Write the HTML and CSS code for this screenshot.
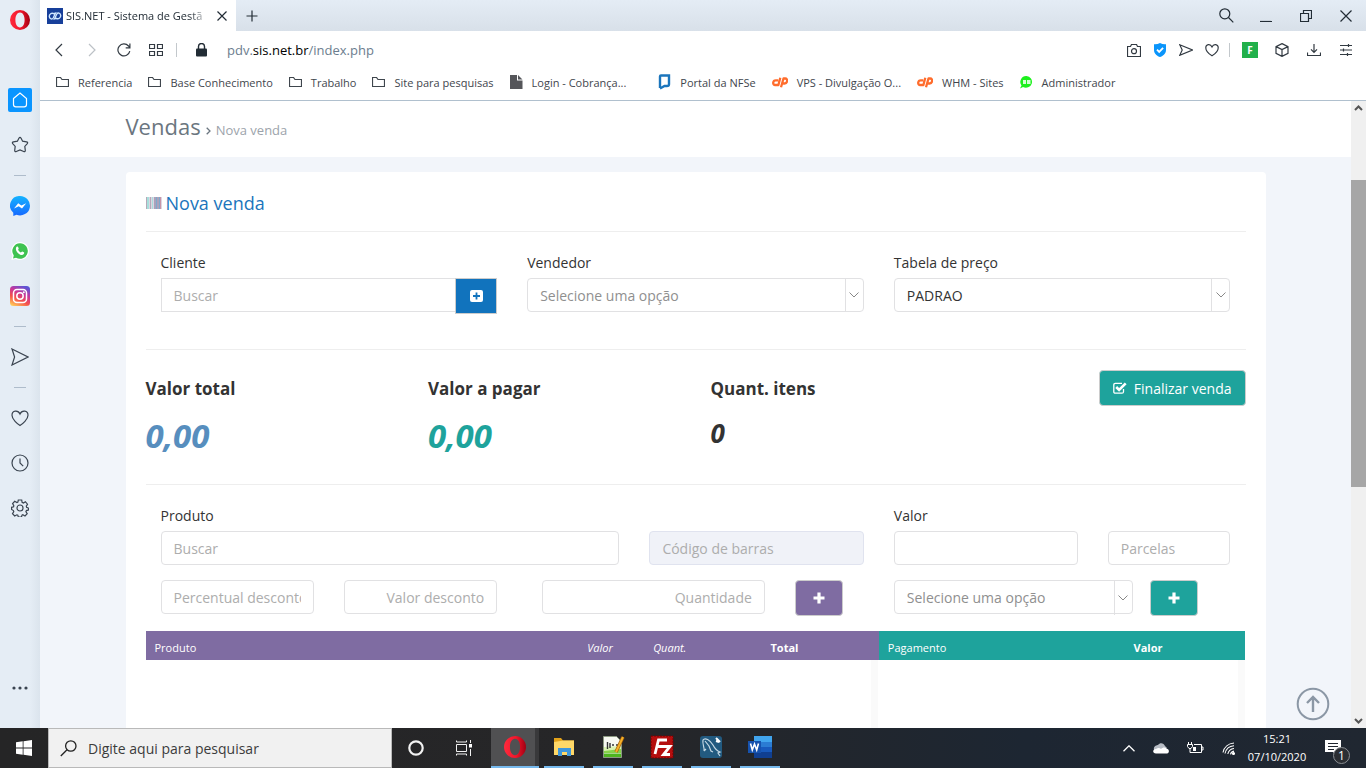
FILE: index.html
```html
<!DOCTYPE html>
<html lang="pt-BR">
<head>
<meta charset="utf-8">
<title>SIS.NET - Sistema de Gestão</title>
<link rel="stylesheet" href="styles.css">
</head>
<body>
<div class="desktop">
  <div class="window">
    <nav class="rail" aria-label="Barra lateral">
      <button class="rail-logo" aria-label="Menu do Opera"><svg width="20" height="20" viewBox="0 0 20 20"><defs><linearGradient id="op" x1="0" x2="1"><stop offset="0" stop-color="#ff2a3d"/><stop offset=".55" stop-color="#f0162b"/><stop offset="1" stop-color="#a10012"/></linearGradient></defs><path fill="url(#op)" fill-rule="evenodd" d="M10 0a10 10 0 1 0 0 20a10 10 0 0 0 0-20zM10 2.600c2.900 0 4.600 3.300 4.600 7.400s-1.700 7.400-4.600 7.400s-4.600-3.300-4.600-7.400s1.700-7.400 4.600-7.400z"/></svg></button>
      <button class="rail-item" aria-label="Início"><span class="rail-active"><svg class="line" width="16" height="16" viewBox="0 0 16 16"><path d="M1.500 6.500L8 1l6.500 5.500v6a2.300 2.300 0 0 1-2.300 2.300H3.800a2.300 2.300 0 0 1-2.300-2.300z"/></svg></span></button>
      <button class="rail-item" aria-label="Favoritos"><svg class="line" width="18" height="18" viewBox="0 0 18 18"><path d="M9 1.300c.5 0 .8.500 1.100 1l1.500 2.900 3.900.7c1.200.2 1.500 1 .8 1.800l-2.500 2.700.5 3.900c.1 1.200-.6 1.700-1.600 1.200L9 14l-3.700 1.500c-1 .5-1.700 0-1.600-1.200l.5-3.900-2.500-2.700c-.7-.8-.4-1.600.8-1.800l3.900-.7 1.500-2.900c.3-.5.600-1 1.100-1z"/></svg></button>
      <span class="rail-sep"></span>
      <button class="rail-item" aria-label="Messenger"><svg width="20" height="20" viewBox="0 0 20 20"><defs><linearGradient id="ms" x1="0" y1="0" x2="0" y2="1"><stop offset="0" stop-color="#14b3ff"/><stop offset="1" stop-color="#1769ff"/></linearGradient></defs><path fill="url(#ms)" d="M10 0a10 9.700 0 1 1-3.500 18.800L3.300 20v-3.200A9.600 9.600 0 0 1 10 0z"/><path fill="#fff" d="M4 12.600l4.200-5.300 3.200 2.300 4.800-2.400-4.200 5.400-3.300-2.400z"/></svg></button>
      <button class="rail-item" aria-label="WhatsApp"><svg width="20" height="20" viewBox="0 0 20 20"><path fill="#fff" d="M10 1a9 9 0 1 1-4.300 16.900L1.300 19l1.200-4.300A9 9 0 0 1 10 1z"/><path fill="#3fc351" d="M10 2.200a7.800 7.800 0 1 1-4 14.500l-3 .8.800-3A7.800 7.800 0 0 1 10 2.200z"/><path fill="#fff" d="M7.100 5.600c.5-.2.800 0 1 .5l.6 1.500c.1.300-.6 1-.6 1.200.5 1.100 1.400 2 2.800 2.700.4 0 .9-1.100 1.300-1l1.700.8c.9.400-.1 2.700-1.800 2.700C9 13.900 5.900 10.200 5.900 7.900c0-1 .6-2.100 1.200-2.300z"/></svg></button>
      <button class="rail-item" aria-label="Instagram"><svg width="20" height="20" viewBox="0 0 20 20"><defs><linearGradient id="ig" x1=".2" y1="1" x2=".7" y2="0"><stop offset="0" stop-color="#ffc857"/><stop offset=".35" stop-color="#f5514a"/><stop offset=".65" stop-color="#c9369a"/><stop offset="1" stop-color="#5b55d6"/></linearGradient></defs><rect width="20" height="20" rx="3.500" fill="url(#ig)"/><g fill="none" stroke="#fff" stroke-width="1.500"><rect x="3.500" y="3.500" width="13" height="13" rx="3.500"/><circle cx="10" cy="10" r="3.200"/></g><circle cx="13.800" cy="6.200" r="1" fill="#fff"/></svg></button>
      <span class="rail-sep"></span>
      <button class="rail-item" aria-label="Meu fluxo"><svg class="line" width="18" height="18" viewBox="0 0 18 18"><path d="M1 1l16 8L1 17l2.600-8z"/></svg></button>
      <span class="rail-sep"></span>
      <button class="rail-item" aria-label="Favoritos do site"><svg class="line" width="18" height="18" viewBox="0 0 18 18"><path d="M9 16.500C6.500 15 1 10.500 1 6.200c0-4.800 6-5.600 8-1.200 2-4.400 8-3.600 8 1.200 0 4.300-5.500 8.800-8 10.300z"/></svg></button>
      <button class="rail-item" aria-label="Histórico"><svg class="line" width="18" height="18" viewBox="0 0 18 18"><circle cx="9" cy="9" r="8"/><path d="M9 4.500V9l3.200 3.200"/></svg></button>
      <button class="rail-item" aria-label="Configurações"><svg class="line" width="18" height="18" viewBox="0 0 18 18"><circle cx="9" cy="9" r="3"/><path d="M7.300 1h3.400l.4 2.400 1.300.7 2-1.400 2.100 2.500-1.200 2 .3 1.200 2 .8v1.700l-2.200.7-.5 1.100 1.300 2-2.200 2.300-2.200-1.200-.8.400-.5 1.800H7.300l-.5-1.800-.9-.4-2.200 1.200-2.200-2.300 1.300-2-.4-1.100L.6 10.500V8.300l2-.5.200-1.200-1.200-2 2.100-2.300 2.200 1.300 1-.5z"/></svg></button>
      <button class="rail-item rail-more" aria-label="Mais"><svg width="16" height="4" viewBox="0 0 16 4" fill="#3a4450"><circle cx="2" cy="2" r="1.600"/><circle cx="8" cy="2" r="1.600"/><circle cx="14" cy="2" r="1.600"/></svg></button>
    </nav>
    <div class="browser">
      <div class="tabs">
        <div class="tab">
          <svg width="16" height="16" viewBox="0 0 16 16"><rect width="16" height="16" fill="#173f9a"/><g fill="none" stroke="#cfe6ff" stroke-width="1.400"><path d="M8.500 5.200L6.200 10c-1 1.600-3.600 1.100-3.900-1.300-.3-2.600 2.500-4.300 4.400-3z"/><path d="M7.500 10.800L9.800 6c1-1.600 3.600-1.100 3.900 1.300.3 2.600-2.500 4.300-4.400 3z"/></g></svg>
          <span class="tab-title">SIS.NET - Sistema de Gestã</span>
          <button class="tab-close" aria-label="Fechar aba"><svg class="line" width="10" height="10" viewBox="0 0 10 10"><path d="M.5.5l9 9M9.500.5l-9 9"/></svg></button>
        </div>
        <button class="tab-new" aria-label="Nova aba"><svg class="line" width="12" height="12" viewBox="0 0 12 12"><path d="M6 .5v11M.5 6h11"/></svg></button>
        <div class="win-buttons">
          <button aria-label="Pesquisar abas"><svg class="line" width="15" height="15" viewBox="0 0 15 15"><circle cx="5.800" cy="5.800" r="5"/><path d="M9.500 9.500l4.800 4.800"/></svg></button>
          <button aria-label="Minimizar"><svg class="line" width="12" height="12" viewBox="0 0 12 12"><path d="M0 11.500h12"/></svg></button>
          <button aria-label="Restaurar"><svg class="line" width="12" height="12" viewBox="0 0 12 12"><path d="M.5 3.500h8v8h-8zM3.500 3.500v-3h8v8h-3"/></svg></button>
          <button aria-label="Fechar"><svg class="line" width="12" height="12" viewBox="0 0 12 12"><path d="M.5.500l11 11M11.500.5l-11 11"/></svg></button>
        </div>
      </div>
      <div class="toolbar">
        <button class="tool" aria-label="Voltar"><svg class="line" width="14" height="14" viewBox="0 0 14 14"><path d="M9 1L3 7l6 6"/></svg></button>
        <button class="tool faded" aria-label="Avançar"><svg class="line" width="14" height="14" viewBox="0 0 14 14"><path d="M4 1l6 6-6 6"/></svg></button>
        <button class="tool" aria-label="Recarregar"><svg class="line" width="14" height="14" viewBox="0 0 14 14"><path d="M12.800 8.200A6 6 0 1 1 11.500 3l1.300 1.700M12.900.5v4.300H8.700"/></svg></button>
        <button class="tool" aria-label="Discagem rápida"><svg class="line" width="14" height="12" viewBox="0 0 14 12"><path d="M.5.500h5v4h-5zM8.500.5h5v4h-5zM.5 7.500h5v4h-5zM8.500 7.500h5v4h-5z"/></svg></button>
        <span class="tool-sep"></span>
        <button class="tool lock" aria-label="Segurança do site"><svg width="11" height="14" viewBox="0 0 11 14"><rect y="5.500" width="11" height="8" rx="1" fill="#222c35"/><path d="M2.500 6V3.500a3 3 0 0 1 6 0V6" fill="none" stroke="#222c35" stroke-width="1.400"/></svg></button>
        <div class="address">pdv.<b>sis.net.br</b>/index.php</div>
        <button class="tool small" aria-label="Captura de tela"><svg class="line" width="14" height="13" viewBox="0 0 14 13"><path d="M.5 2.500h3l1-2h5l1 2h3v10H.5z"/><circle cx="7" cy="7.200" r="2.500"/></svg></button>
        <button class="tool small" aria-label="Bloqueador"><svg width="12" height="14" viewBox="0 0 12 14"><path fill="#0a95fb" d="M6 0c1.800 1 4 1.400 6 1.200V7c0 4-3.600 6.200-6 7C3.600 13.200 0 11 0 7V1.200C2 1.400 4.200 1 6 0z"/><path d="M3 6.700l2.200 2.200 3.900-4" fill="none" stroke="#fff" stroke-width="1.800"/></svg></button>
        <button class="tool small" aria-label="Enviar"><svg class="line" width="14" height="12" viewBox="0 0 14 12"><path d="M.7.7L13.500 6 .7 11.300 3.200 6z"/></svg></button>
        <button class="tool small" aria-label="Favoritar"><svg class="line" width="14" height="14" viewBox="0 0 18 18"><path stroke-width="1.500" d="M9 16.500C6.500 15 1 10.500 1 6.200c0-4.800 6-5.600 8-1.200 2-4.400 8-3.600 8 1.200 0 4.300-5.500 8.800-8 10.300z"/></svg></button>
        <span class="tool-sep"></span>
        <button class="tool" aria-label="Extensão F"><span class="ext">F</span></button>
        <button class="tool" aria-label="Extensões"><svg class="line" width="14" height="14" viewBox="0 0 14 14"><path d="M7 .6l6 3v6.800l-6 3-6-3V3.600zM1 3.600l6 3 6-3M7 6.600v6.800"/></svg></button>
        <button class="tool" aria-label="Downloads"><svg class="line" width="14" height="12" viewBox="0 0 14 12"><path d="M7 0v8M4 5.300l3 3 3-3M.5 8.500v3h13v-3"/></svg></button>
        <button class="tool" aria-label="Configuração fácil"><svg class="line" width="12" height="12" viewBox="0 0 12 12"><path d="M0 1.500h12M0 6h12M0 10.500h12M8.500 0v3M3.500 4.500v3M7.500 9v3"/></svg></button>
      </div>
      <nav class="bookmarks" aria-label="Favoritos">
        <a href="#"><svg class="line" width="13" height="10" viewBox="0 0 13 10"><path d="M.5 9.500v-9h4l1.500 2h6.500v7z"/></svg>Referencia</a>
        <a href="#"><svg class="line" width="13" height="10" viewBox="0 0 13 10"><path d="M.5 9.500v-9h4l1.500 2h6.500v7z"/></svg>Base Conhecimento</a>
        <a href="#"><svg class="line" width="13" height="10" viewBox="0 0 13 10"><path d="M.5 9.500v-9h4l1.500 2h6.500v7z"/></svg>Trabalho</a>
        <a href="#"><svg class="line" width="13" height="10" viewBox="0 0 13 10"><path d="M.5 9.500v-9h4l1.500 2h6.500v7z"/></svg>Site para pesquisas</a>
        <a href="#" class="wide"><svg width="13" height="14" viewBox="0 0 13 14"><path fill="#55565a" d="M0 0h7v5.500h5.500V14H0zM8 0l4.500 4.500H8z"/></svg>Login - Cobrança...</a>
        <a href="#"><svg width="13" height="16" viewBox="0 0 13 16"><path fill="none" stroke="#1b75bc" stroke-width="2.400" d="M2 14V2.500q0-1 1-1h8v8.700q0 1.800-2 1.800H6.500L2 14.500"/></svg>Portal da NFSe</a>
        <a href="#"><svg width="16" height="12" viewBox="0 0 16 12"><path fill="none" stroke="#ff6c2c" stroke-width="2.300" stroke-linejoin="round" d="M6.200 4.300H3.800C.7 4.300.2 9 3.200 9h3.200L8.300 1.800M9 11.300l2.500-8.800h1.700c3.200 0 2.100 5-.6 5h-1.500"/></svg>VPS - Divulgação O...</a>
        <a href="#"><svg width="16" height="12" viewBox="0 0 16 12"><path fill="none" stroke="#ff6c2c" stroke-width="2.300" stroke-linejoin="round" d="M6.200 4.300H3.800C.7 4.300.2 9 3.200 9h3.200L8.300 1.800M9 11.300l2.500-8.800h1.700c3.200 0 2.100 5-.6 5h-1.500"/></svg>WHM - Sites</a>
        <a href="#"><svg width="13" height="13" viewBox="0 0 13 13"><path fill="#1df01d" d="M6.500 0a6 5.900 0 1 1-3.500 11L0 12.600l1.500-3.200A6 5.900 0 0 1 6.500 0z"/><path fill="#d4ffd4" d="M3 4h3v4H3zM7 4h3.500v4H7z"/></svg>Administrador</a>
      </nav>
      <div class="viewport">
        <main class="page">
          <header class="page-head">
            <div class="container crumbs">
              <h1>Vendas</h1>
              <svg width="5" height="8" viewBox="0 0 5 8"><path d="M.7.700L4 4 .7 7.300" fill="none" stroke="#6b7680" stroke-width="1.300"/></svg>
              <span>Nova venda</span>
            </div>
          </header>
          <div class="container body">
            <section class="card">
              <h2><svg width="16" height="12" viewBox="0 0 16 12"><path fill="#dcd5e2" d="M0 0h16v12H0z"/><path fill="#b5a9b8" d="M0 0h1v12H0zM4 0h1v12H4z"/><path fill="#a8dfdc" d="M1 0h2v12H1zM6 0h1v12H6z"/><path fill="#aba2ba" d="M8 0h2v12H8zM11 0h2v12h-2z"/><path fill="#7fa8cc" d="M10 0h1v12h-1zM13 0h1v12h-1z"/><path fill="#c895a8" d="M14 0h1v12h-1z"/></svg>Nova venda</h2>
              <form class="sale-form">
                <div class="field">
                  <label for="cliente">Cliente</label>
                  <div class="group">
                    <input id="cliente" type="text" placeholder="Buscar">
                    <button type="button" class="btn btn-blue" aria-label="Adicionar cliente"><svg width="13" height="12" viewBox="0 0 13 12"><rect width="13" height="12" rx="2" fill="#fff"/><path d="M6.500 2.500v7M3 6h7" stroke="#1173bd" stroke-width="1.800"/></svg></button>
                  </div>
                </div>
                <div class="field">
                  <label for="vendedor">Vendedor</label>
                  <div class="select"><select id="vendedor" class="muted"><option>Selecione uma opção</option></select><span class="arrow"><svg width="10" height="6" viewBox="0 0 10 6"><path d="M.5.500L5 5 9.500.5"/></svg></span></div>
                </div>
                <div class="field">
                  <label for="tabela">Tabela de preço</label>
                  <div class="select"><select id="tabela"><option>PADRAO</option></select><span class="arrow"><svg width="10" height="6" viewBox="0 0 10 6"><path d="M.5.500L5 5 9.500.5"/></svg></span></div>
                </div>
              </form>
              <div class="totals">
                <div class="total blue"><h3>Valor total</h3><p>0,00</p></div>
                <div class="total teal"><h3>Valor a pagar</h3><p>0,00</p></div>
                <div class="total count"><h3>Quant. itens</h3><p>0</p></div>
                <div class="finish"><button type="button" class="btn btn-teal"><svg width="14" height="12" viewBox="0 0 14 12"><path d="M10.500 7v2.700q0 1.500-1.500 1.500H2.300Q.8 11.200.8 9.700V2.900q0-1.500 1.500-1.500H9" fill="none" stroke="#fff" stroke-width="1.300"/><path d="M3.200 5l2.900 2.900L12.700 1.300" fill="none" stroke="#fff" stroke-width="2.600"/></svg>Finalizar venda</button></div>
              </div>
              <div class="entry">
                <form class="left">
                  <div class="product-row">
                    <div class="field"><label for="produto">Produto</label><input id="produto" type="text" placeholder="Buscar"></div>
                    <div class="field end"><input type="text" aria-label="Código de barras" placeholder="Código de barras" disabled></div>
                  </div>
                  <div class="discount-row">
                    <div class="field"><input type="text" aria-label="Percentual desconto" placeholder="Percentual desconto"></div>
                    <div class="field"><input class="right-text" type="text" aria-label="Valor desconto" placeholder="Valor desconto"></div>
                    <div class="field quantity"><input class="right-text" type="text" aria-label="Quantidade" placeholder="Quantidade"></div>
                    <div class="field"><button type="button" class="btn btn-purple" aria-label="Adicionar produto"><svg width="12" height="12" viewBox="0 0 12 12"><path d="M6 .5v11M.5 6h11" stroke="#fff" stroke-width="3.200"/></svg></button></div>
                  </div>
                </form>
                <form class="right">
                  <div class="payment-row">
                    <div class="field"><label for="valor">Valor</label><input id="valor" type="text"></div>
                    <div class="field end"><input type="text" aria-label="Parcelas" placeholder="Parcelas"></div>
                  </div>
                  <div class="method-row">
                    <div class="select"><select class="muted" aria-label="Forma de pagamento"><option>Selecione uma opção</option></select><span class="arrow"><svg width="10" height="6" viewBox="0 0 10 6"><path d="M.5.500L5 5 9.500.5"/></svg></span></div>
                    <button type="button" class="btn btn-teal" aria-label="Adicionar pagamento"><svg width="12" height="12" viewBox="0 0 12 12"><path d="M6 .5v11M.5 6h11" stroke="#fff" stroke-width="3.200"/></svg></button>
                  </div>
                </form>
              </div>
              <div class="lists">
                <div class="list items">
                  <table><colgroup><col class="c-name"><col class="c-price"><col class="c-qty"><col></colgroup><thead><tr><th>Produto</th><th class="italic">Valor</th><th class="italic">Quant.</th><th class="strong">Total</th></tr></thead></table>
                  <div class="list-body"></div>
                </div>
                <div class="list payments">
                  <table><colgroup><col class="c-pay"><col></colgroup><thead><tr><th>Pagamento</th><th class="strong">Valor</th></tr></thead></table>
                  <div class="list-body"></div>
                </div>
              </div>
            </section>
          </div>
          <button class="to-top" aria-label="Voltar ao topo"><svg width="34" height="34" viewBox="0 0 34 34" fill="none" stroke="#8b97a5" stroke-width="2"><circle cx="17" cy="17" r="15.300"/><path d="M17 25V10.500M11 16l6-6 6 6" stroke-width="2.400"/></svg></button>
        </main>
        <div class="scrollbar" aria-hidden="true">
          <svg width="9" height="6" viewBox="0 0 9 6"><path d="M1 5l3.500-3.500L8 5"/></svg>
          <div class="track"><div class="thumb"></div></div>
          <svg width="9" height="6" viewBox="0 0 9 6"><path d="M1 1l3.500 3.500L8 1"/></svg>
        </div>
      </div>
    </div>
  </div>
  <footer class="taskbar">
    <button class="start" aria-label="Iniciar"><svg width="16" height="16" viewBox="0 0 16 16" fill="#fff"><path d="M0 2.200l6.700-.9v6.300H0zM7.500 1.200L16 0v7.600H7.500zM0 8.400h6.700v6.300L0 13.800zM7.500 8.400H16V16l-8.500-1.200z"/></svg></button>
    <label class="search"><svg width="17" height="17" viewBox="0 0 17 17" fill="none" stroke="#222" stroke-width="1.300"><circle cx="10.800" cy="6" r="5.200"/><path d="M7 9.800L.8 16"/></svg><input type="text" placeholder="Digite aqui para pesquisar" aria-label="Pesquisar"></label>
    <button class="slot" aria-label="Cortana"><svg width="16" height="16" viewBox="0 0 16 16"><circle cx="8" cy="8" r="6.700" fill="none" stroke="#f2f2f2" stroke-width="2.200"/></svg></button>
    <button class="slot" aria-label="Visão de tarefas"><svg width="16" height="16" viewBox="0 0 16 16" fill="none" stroke="#f2f2f2"><path d="M.5 4.500h10v7H.5zM.5.500v1.500h10V.5M.5 15.500V14h10v1.500M14.500 0v3M14.500 9v7"/><path fill="#fff" stroke="none" d="M13 4h3v3.500h-3z"/></svg></button>
    <div class="apps">
      <button class="app active" aria-label="Opera"><svg width="22" height="22" viewBox="0 0 20 20"><path fill="url(#op)" fill-rule="evenodd" d="M10 0a10 10 0 1 0 0 20a10 10 0 0 0 0-20zM10 2.600c2.900 0 4.600 3.300 4.600 7.400s-1.700 7.400-4.600 7.400s-4.600-3.300-4.600-7.400s1.700-7.400 4.600-7.400z"/></svg></button>
      <button class="app" aria-label="Explorador de Arquivos"><svg width="22" height="20" viewBox="0 0 22 20"><path fill="#e3a21a" d="M1 1h7l2 2.500h11V8H1z"/><path fill="#ffd868" d="M1 5l9-1.500h11V18H1z"/><path fill="#3f97dc" d="M5 19v-8h13v8h-4v-4H9v4z"/></svg></button>
      <button class="app" aria-label="Notepad++"><svg width="24" height="24" viewBox="0 0 24 24"><path fill="#f7f9f2" stroke="#8d9a83" d="M2.500 1.500h13l5 5v16h-18z"/><path fill="#d9f3b0" d="M3 12l17-1v6H3z"/><path fill="#86d34a" d="M3 16l17-2v4H3z"/><path fill="#4eb51f" d="M3 18.500h17V22H3z"/><path fill="none" stroke="#333" stroke-width="1.400" d="M6.500 7v7M9 8v5M11 10h2M15 10h2"/><path d="M22 2l-7 15" stroke="#a55e08" stroke-width="3.400"/><path d="M22 2l-7 15" stroke="#f4b12a" stroke-width="2"/></svg></button>
      <button class="app" aria-label="FileZilla"><svg width="24" height="24" viewBox="0 0 24 24"><path fill="#b50e0e" stroke="#760000" stroke-dasharray="2 1" d="M1 1h22v22H1z"/><path fill="none" stroke="#fff" stroke-width="2.800" d="M5 19L8.500 5H17M7 11.500h7.500M12 11.500h8l-6.500 8H20"/></svg></button>
      <button class="app" aria-label="MySQL Workbench"><svg width="24" height="24" viewBox="0 0 24 24"><rect x="1" y="1" width="22" height="22" rx="3" fill="#225a80"/><path fill="none" stroke="#c5d9e5" stroke-width="1.200" d="M5 16c1-3-2-7-1-11 2-3 7 0 10 5 2 4 4 6 7 7l-2 1 2 3M5 16l2-2M6 6l4 5 2 5 2 1"/><path fill="none" stroke="#fff" stroke-width="2" d="M17 3l4 4M17 6l3 1"/></svg></button>
      <button class="app" aria-label="Word"><svg width="24" height="22" viewBox="0 0 24 22"><path fill="#41a5ee" d="M6 0h18v6H6z"/><path fill="#2b7cd3" d="M6 6h18v5H6z"/><path fill="#185abd" d="M6 11h18v5H6z"/><path fill="#103f91" d="M6 16h18v6H6z"/><path fill="#1652ae" d="M0 5h13v12H0z"/><path fill="none" stroke="#fff" stroke-width="1.600" d="M2.500 7.500L4.300 14l2.200-6 2.200 6 1.800-6.500"/></svg></button>
    </div>
    <div class="tray">
      <svg width="12" height="7" viewBox="0 0 12 7" fill="none" stroke="#fff" stroke-width="1.300"><path d="M.5 6.300L6 .8l5.500 5.500"/></svg>
      <svg width="16" height="11" viewBox="0 0 16 11"><path fill="#b7bcc4" d="M1 7C0 3 4 2 5 2c2-3 6-2 7 1l2 2-5 4z"/><path fill="#fff" d="M3 10.500C-1 10.500-.5 6 3 6c2-1.500 4-1 5 0 2-2 4-2 5.500-.5 3.500 1 3 5-.5 5z"/></svg>
      <svg width="17" height="12" viewBox="0 0 17 12" fill="none" stroke="#fff"><path d="M7 2.500h7.500v8H5M14.500 5h1.500v3h-1.500M.5 2.500h5v2l-1.500 2H2L.5 4.500zM1.500 0v2.500M4.500 0v2.500M3 6.500v4h2"/><path fill="#fff" stroke="none" d="M6 5h3v4H6z"/></svg>
      <svg width="15" height="13" viewBox="0 0 15 13" fill="none" stroke="#fff" stroke-width="1.100"><path d="M1 10.500C2 5 6.500 1.500 12 1M3 11.500C4 7 7.500 4 12 3.700M5.800 12c.7-3 3-5.300 6.200-5.500M8.500 12.300c.3-1.600 1.500-2.900 3.500-3.200"/><circle cx="11.500" cy="11.500" r="1" fill="#fff"/></svg>
    </div>
    <div class="clock"><span>15:21</span><span>07/10/2020</span></div>
    <button class="notify" aria-label="Notificações"><svg width="16" height="16" viewBox="0 0 16 16"><path fill="#fff" d="M0 0h16v12h-4v4l-4-4H0z"/><path stroke="#20262f" d="M3 3.500h10M3 6.500h10M3 9.500h6"/></svg><span class="count-badge">1</span></button>
  </footer>
</div>
</body>
</html>
```
FILE: styles.css
```css
* { box-sizing: border-box; }
body { margin: 0; font-family: "Open Sans", "Noto Sans", sans-serif; color: #333; }
button { border: 0; padding: 0; margin: 0; background: none; font: inherit; color: inherit; display: flex; align-items: center; justify-content: center; }
h1, h2, h3, p { margin: 0; }
svg { flex: none; display: block; }
.line { fill: none; stroke: currentColor; stroke-width: 1.2; }

.desktop { height: 100vh; display: flex; flex-direction: column; overflow: hidden; }
.window { flex: 1; min-height: 0; display: flex; }

/* Sidebar */
.rail { width: 40px; flex: none; display: flex; flex-direction: column; align-items: center; background: linear-gradient(90deg, #e5edf5 75%, #dbe4ed); color: #3a4450; }
.rail-logo { width: 40px; height: 40px; margin-bottom: 37px; }
.rail-item { width: 40px; height: 45px; }
.rail-active { width: 24px; height: 24px; border-radius: 2px; background: #0a95ff; color: #fff; display: flex; align-items: center; justify-content: center; }
.rail-sep { width: 12px; height: 1px; margin: 8px 0 7px; background: #aebccb; }
.rail-more { margin-top: auto; margin-bottom: 18px; }

/* Browser frame */
.browser { flex: 1; min-width: 0; display: flex; flex-direction: column; background: #fff; }
.tabs { height: 31px; flex: none; display: flex; background: linear-gradient(#e4ecf5, #d8e0e9); color: #222c35; }
.tab { width: 196px; display: flex; align-items: center; padding: 0 9px 0 7px; background: #fff; }
.tab-title { flex: 1; margin-left: 3px; overflow: hidden; white-space: nowrap; font-size: 11px; mask-image: linear-gradient(90deg, #000 85%, transparent); }
.tab-close { width: 10px; margin-left: 6px; }
.tab-new { width: 31px; }
.win-buttons { margin-left: auto; display: flex; }
.win-buttons button { width: 40px; }
.toolbar { height: 38px; flex: none; display: flex; align-items: center; padding: 0 4px; color: #323a42; }
.tool { width: 32px; height: 32px; }
.tool.small { width: 26px; }
.tool.lock { margin-left: 4px; }
.faded { color: #bcc1c6; }
.tool-sep { width: 1px; height: 14px; margin: 0 4px; background: #c3c8cc; }
.address { flex: 1; margin-left: 10px; font-size: 13px; color: #6b7d8e; }
.address b { font-weight: 400; color: #000; }
.ext { width: 16px; height: 16px; background: #22b04b; color: #fff; font-size: 10px; font-weight: 700; line-height: 16px; }
.bookmarks { height: 32px; flex: none; display: flex; align-items: flex-start; gap: 16px; padding: 3px 16px 0; border-bottom: 1px solid #b0c0ce; white-space: nowrap; overflow: hidden; }
.bookmarks a { display: flex; align-items: center; gap: 9px; height: 20px; font-size: 11px; color: #3f464d; text-decoration: none; }
.bookmarks .wide { margin-right: 16px; }

/* Page */
.viewport { flex: 1; min-height: 0; display: flex; }
.page { flex: 1; min-width: 0; display: flex; flex-direction: column; overflow: hidden; position: relative; background: #f2f5fa; }
.container { width: 100%; max-width: 1140px; margin: 0 auto; }
.page-head { flex: none; height: 56px; background: #fff; }
.crumbs { display: flex; align-items: baseline; gap: 5px; padding-top: 9px; color: #6b7680; }
.crumbs h1 { font-size: 22px; font-weight: 400; line-height: 32px; }
.crumbs span { font-size: 13px; color: #9ca3ab; }
.body { flex: 1; min-height: 0; padding-top: 15px; display: flex; }
.card { flex: 1; min-width: 0; display: flex; flex-direction: column; padding: 20px 20px 0; background: #fff; border-radius: 4px 4px 0 0; }
h2 { display: flex; align-items: center; gap: 4px; padding-bottom: 17px; border-bottom: 1px solid #eee; font-size: 18px; font-weight: 400; line-height: 22px; color: #1b75bc; }

.field { min-width: 0; padding: 0 15px; }
.field label { display: block; margin-bottom: 5px; font-size: 14px; line-height: 20px; }
.field.end { align-self: end; }
input, select { width: 100%; height: 34px; padding: 6px 12px; border: 1px solid #e1e1e3; border-radius: 4px; background: #fff; font: 14px "Open Sans", "Noto Sans", sans-serif; color: #333; }
input::placeholder { color: #adadad; opacity: 1; }
input:disabled { background: #f0f2f8; border-color: #e0e3ef; }
.right-text { text-align: right; }
.select { position: relative; display: flex; }
select { appearance: none; padding-right: 24px; }
select.muted { color: #8f8f8f; }
.arrow { position: absolute; top: 1px; bottom: 1px; right: 1px; width: 18px; border-left: 1px solid #e1e1e3; display: flex; align-items: center; justify-content: center; pointer-events: none; }
.arrow path { fill: none; stroke: #888; }
.btn { height: 36px; min-width: 48px; border: 1px solid #ccc; border-radius: 4px; color: #fff; font-size: 14px; }
.btn-blue { background: #1173bd; min-width: 42px; border-radius: 0; }
.btn-teal { background: #1ea39c; }
.btn-purple { background: #7f6ca2; }

.sale-form { display: grid; grid-template-columns: repeat(3, 1fr); padding: 21px 0 35px; border-bottom: 1px solid #eee; }
.group { display: flex; align-items: flex-start; }
.group input { border-right: 0; border-radius: 0; }
.totals { display: grid; grid-template-columns: repeat(4, 1fr); gap: 30px; padding: 20px 0 25px; border-bottom: 1px solid #eee; }
.total h3 { padding-top: 7px; font-size: 17px; font-weight: 700; line-height: 24px; }
.total p { margin-top: 12px; font-size: 33px; font-weight: 700; font-style: italic; line-height: 46px; }
.blue p { color: #578ebe; }
.teal p { color: #1ea39c; }
.total.count p { font-size: 26px; line-height: 41px; }
.finish { display: flex; justify-content: flex-end; align-items: flex-start; }
.finish .btn { padding: 0 13px; gap: 7px; }

.entry { display: grid; grid-template-columns: 2fr 1fr; padding-top: 21px; }
.product-row { display: grid; grid-template-columns: 2fr 1fr; }
.discount-row { display: grid; grid-template-columns: 50fr 50fr 73fr 27fr; padding-top: 15px; }
.quantity { padding-left: 30px; }
.payment-row { display: grid; grid-template-columns: 7fr 5fr; }
.method-row { display: flex; gap: 17px; padding: 15px 15px 0; }
.method-row .select { flex: 0 0 71%; }

.lists { flex: 1; min-height: 0; display: grid; grid-template-columns: 2fr 1fr; padding-top: 15px; }
.list { display: flex; flex-direction: column; min-height: 0; }
.list table { width: 100%; table-layout: fixed; border-collapse: collapse; color: #fff; }
.list th { height: 29px; padding: 4px 0 0 9px; font-size: 11px; font-weight: 400; text-align: left; }
.list .italic { font-style: italic; }
.list .strong { font-weight: 700; }
.items table { background: #7f6ca2; }
.payments table { background: #1ea39c; }
.c-name { width: 59%; }
.c-price { width: 9%; }
.c-qty { width: 16%; }
.c-pay { width: 67%; }
.list-body { flex: 1; border-right: 7px solid #fafafa; }
.items .list-body { margin-right: 1px; }
.to-top { position: absolute; right: 21px; bottom: 7px; }

.scrollbar { width: 15px; flex: none; display: flex; flex-direction: column; align-items: center; padding: 4px 0; background: #f0f0f0; }
.scrollbar path { fill: none; stroke: #555; stroke-width: 2; }
.track { flex: 1; width: 100%; padding-top: 69px; }
.thumb { height: 57%; background: #a6a6a6; }

/* Taskbar */
.taskbar { height: 40px; flex: none; display: flex; background: linear-gradient(90deg, #252526, #262628 45%, #1d2632 75%, #202731); color: #fff; }
.start { width: 48px; }
.search { width: 344px; display: flex; align-items: center; gap: 11px; padding: 0 11px; background: #f1f1f1; border: 1px solid #b9b9b9; }
.search input { flex: 1; height: 30px; border: 0; padding: 0; background: none; }
.search input::placeholder { color: #3c3c3c; }
.slot { width: 48px; }
.apps { display: flex; gap: 9px; margin-left: 3px; }
.app { width: 40px; border-bottom: 2px solid #76b9ed; }
.app.active { width: 48px; margin-right: -4px; background: linear-gradient(90deg, #505052 44px, #39393b 44px); }
.tray { margin-left: auto; display: flex; align-items: center; gap: 18px; }
.clock { width: 80px; display: flex; flex-direction: column; justify-content: center; align-items: center; font-size: 11px; line-height: 18px; }
.notify { position: relative; width: 45px; margin-right: 4px; padding-right: 13px; }
.count-badge { position: absolute; left: 16px; top: 19px; width: 17px; height: 17px; border: 1px solid #8b8f94; border-radius: 50%; background: #2b2e33; font-size: 12px; line-height: 15px; text-align: center; }
```
